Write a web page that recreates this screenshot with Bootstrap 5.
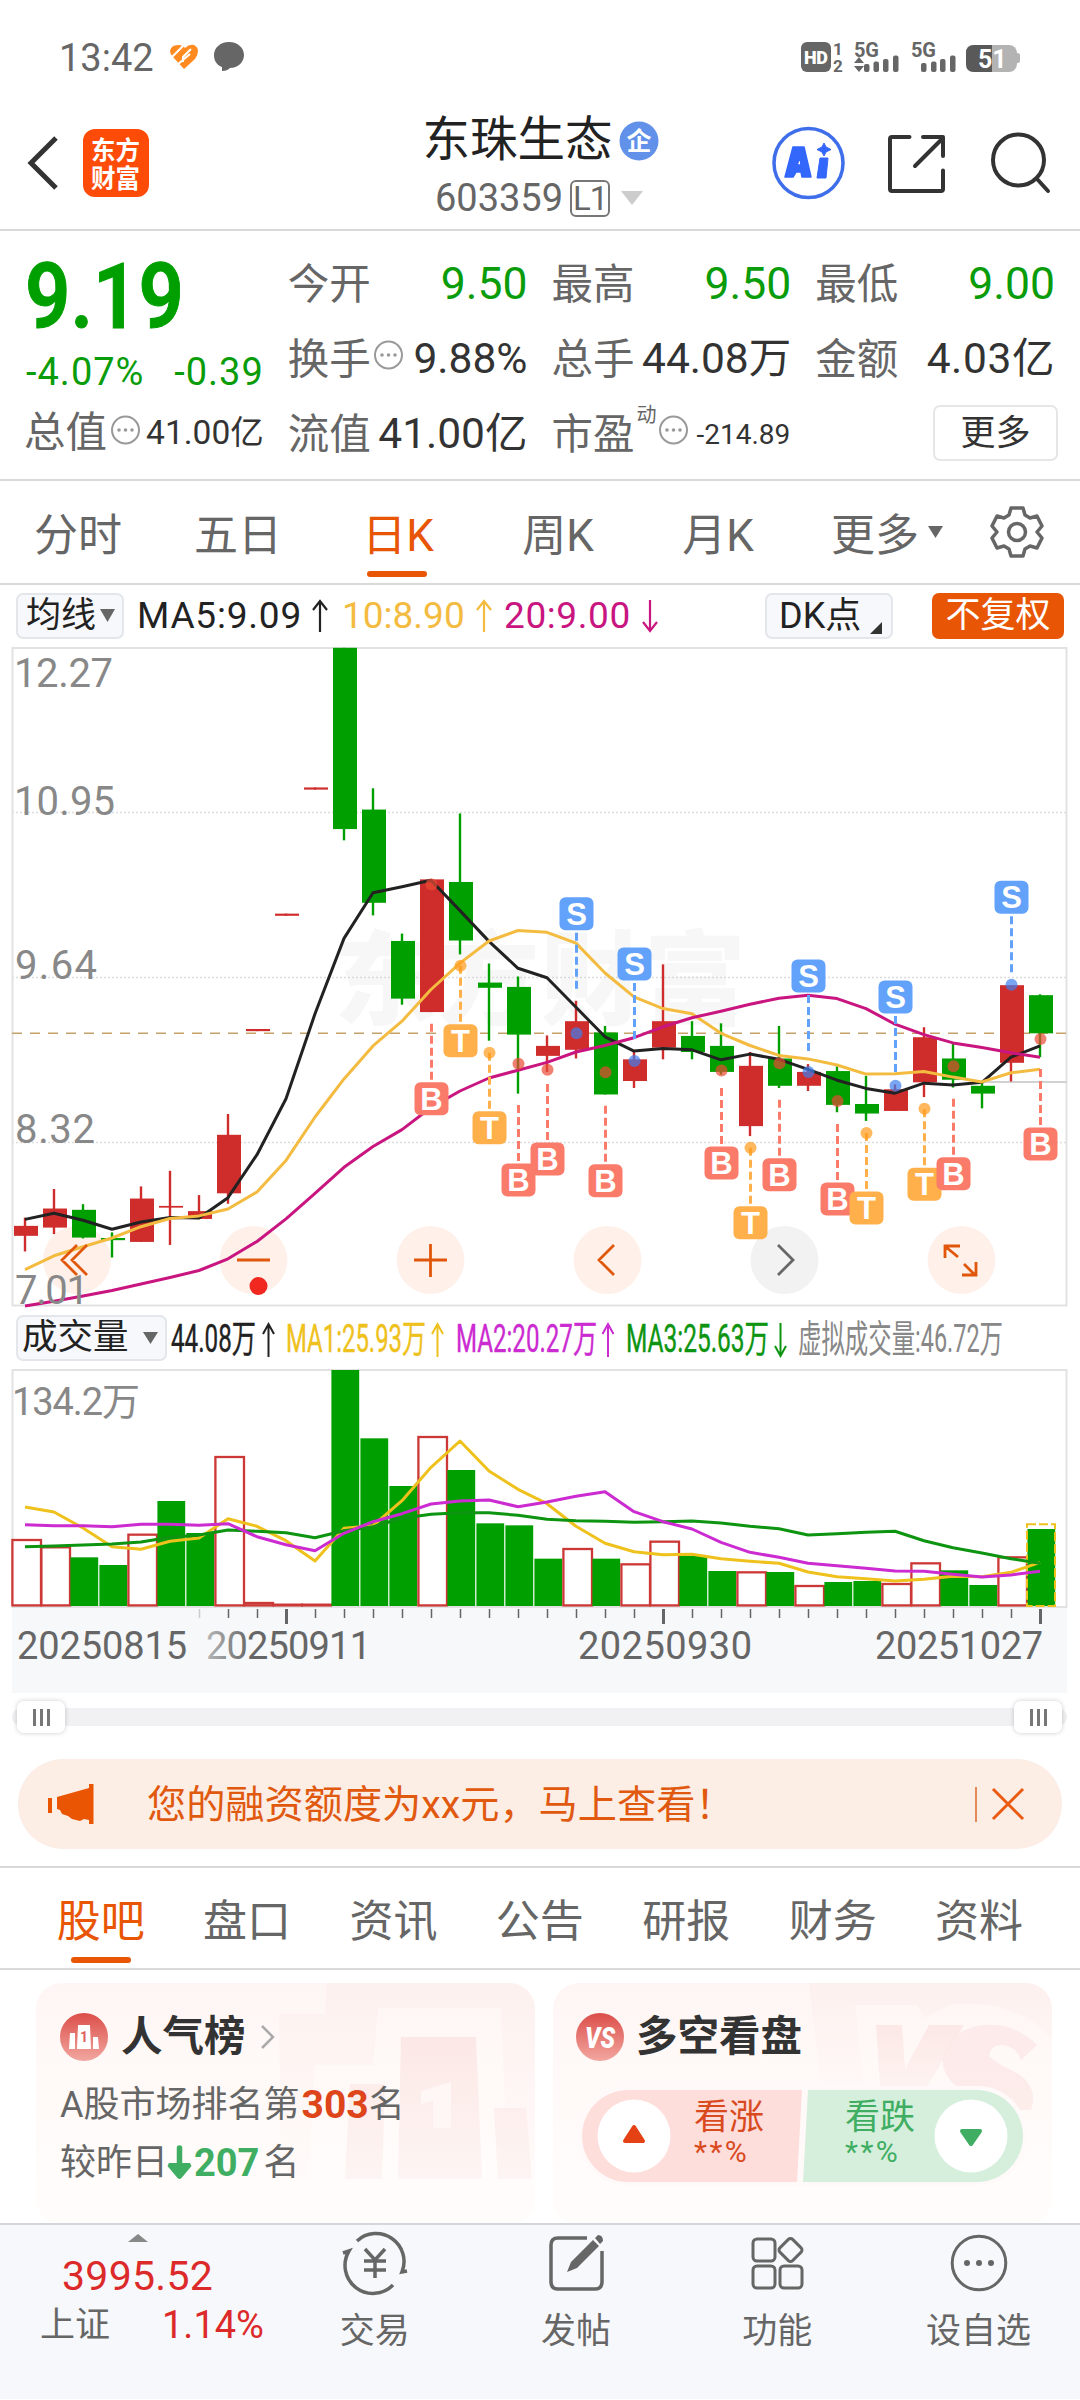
<!DOCTYPE html>
<html lang="zh-CN">
<head>
<meta charset="utf-8">
<meta name="viewport" content="width=device-width, initial-scale=1">
<title>东珠生态 603359</title>
<link href="https://cdn.jsdelivr.net/npm/bootstrap@5.3.0/dist/css/bootstrap.min.css" rel="stylesheet">
<style>
  body { width:1080px; height:2400px; overflow:hidden; background:#fff; color:#333;
    font-family:Roboto,"Noto Sans CJK SC",sans-serif; font-size:38px; line-height:1; }
  svg { display:block; flex:none; overflow:visible; }
  svg text { font-family:Roboto,"Noto Sans CJK SC",sans-serif; }
  .line-b { border-bottom:2px solid #d9d9d9; }
  .g { color:#0a9c0a; } .t6 { color:#666; } .or { color:#e85504; }
  .status-row { height:76px; padding:40px 0 0 59px; color:#666; }
  .head-row { height:155px; padding:0 28px 0 27px; }
  .head-left, .head-right { width:290px; height:100%; padding-top:10px; }
  .stock-name { font-size:47.5px; color:#222; height:52px; }
  .stock-code { height:44px; margin-top:9px; color:#666; margin-left:-3px; }
  .l1-box { border:2px solid #777; border-radius:6px; width:40px; height:37px; font-size:33px; margin-left:7px; letter-spacing:-1px; }
  .quote { height:250px; padding:16px 25px 0 26px; display:grid; grid-template-columns:repeat(4,1fr); column-gap:26px; }
  .quote .cellrow { height:75px; white-space:nowrap; }
  .lab { font-size:41.5px; color:#666; margin-left:-2px; }
  .val { font-size:44.5px; } .v2 { font-size:42.5px; } .v3 { font-size:33.5px; } .v4 { font-size:28px; }
  .more-btn { width:125px; height:56px; border:2px solid #e6e6e6; border-radius:7px; font-size:35px; margin:-3px -3px 0 0; }
  .ktabs { height:104px; font-size:44px; color:#666; padding-top:8px; }
  .ktabs .ktab { width:160px; text-align:center; position:relative; }
  .underbar { position:absolute; width:60px; height:6px; border-radius:3px; background:#e85504; left:50%; margin-left:-31px; }
  .ma-row { height:61px; padding-left:16px; font-size:37px; color:#222; }
  .softbtn { background:#f7f8fb; border:2px solid #e3e6ea; border-radius:7px; height:46px; color:#222; }
  .adj { background:#e85504; color:#fff; border-radius:7px; width:132px; height:46px; font-size:35px; margin-right:16px; }
  .vol-row { height:60px; padding-left:16px; }
  .sliderbox { height:65px; padding:14px 13px 0 12px; }
  .slidetrack { height:18px; border-radius:9px; background:#f1f1f3; width:1055px; padding:0 5px; }
  .knob { width:48px; height:32px; background:#fff; border-radius:7px; box-shadow:0 0 5px rgba(0,0,0,.2); gap:4px; }
  .knob i { width:3px; height:17px; background:#777; }
  .notice { margin:0 18px; height:90px; border-radius:45px; background:#fcede5; color:#e0590f; font-size:39.2px; padding:0 38px 0 29px; }
  .notice .vr-line { width:2px; height:35px; background:#e08a5a; }
  .btabs { height:104px; padding:7px 27px 0 27.5px; font-size:44px; color:#666; border-top:2px solid #d9d9d9; margin-top:17px; }
  .btabs > div { width:146.4px; text-align:center; position:relative; }
  .cards { height:253px; padding:13px 28px 0 36px; gap:18px; overflow:hidden; }
  .pcard { position:relative; width:499px; height:242px; border-radius:26px; background:linear-gradient(#fef6f4,#fffaf8 50%,#fffdfc); overflow:hidden; padding:30px 24px 0 25px; }
  .pcard .deco { position:absolute; left:0; top:0; }
  .ptitle { font-size:41.5px; font-weight:700; color:#333; height:48px; position:relative; }
  .pline { font-size:36px; color:#666; position:relative; white-space:nowrap; }
  .pline b { font-size:39px; }
  .pill { position:relative; width:449px; height:99px; margin:25px 0 0 -1px; }
  .pillbody { position:absolute; left:74px; width:350px; top:0; height:99px; padding:14px 0 0 43px; }
  .pillbody > div { width:151px; }
  .pillbody p { font-size:30px; line-height:34px; letter-spacing:2.5px; }
  .botnav { height:176px; background:#f7f8fb; border-top:2px solid #d3d6db; color:#666; font-size:35px; padding-top:9px; }
  .botnav .nitem { width:201.3px; }
  .botnav .ncap { margin-top:22px; }
</style>
</head>
<body>
<!-- status bar -->
<div class="status-row d-flex">
  <span style="line-height:36px">13:42</span>
  <svg width="80" height="36" viewBox="168 40 80 36" style="margin-left:14px"><path d="M170 51q1-6 8-6 5 0 7 3 4-4 9-3 4 2 4 6 0 4-3 8l-11 10-11-12q-3-3-3-6" fill="#ff8a1f"/><path d="M170 59l13-13M177 65l13-11M183 62v-5l8-8" stroke="#fff" stroke-width="2" fill="none"/><path d="M229 42c9 0 15 6 15 13s-6 13-14 13c-2 2-4 3-8 3v-4c-5-2-8-6-8-12 0-7 6-13 15-13z" fill="#666"/></svg>
  <svg width="230" height="36" viewBox="795 40 230 36" style="margin-left:547px">
    <rect x="801" y="42" width="30" height="30" rx="6" fill="#666"/><text x="804" y="64" font-size="18" font-weight="900" fill="#fff" textLength="24">HD</text>
    <g fill="#666" font-weight="700"><text x="833" y="55" font-size="17">1</text><text x="833" y="71.500" font-size="17">2</text><text x="854" y="56.500" font-size="20" textLength="25">5G</text><text x="911" y="56.500" font-size="20" textLength="25">5G</text>
    <path d="M859 57l5 6h-10zM859 72l5-6h-10z"/>
    <rect x="864" y="64" width="5.500" height="8" rx="2"/><rect x="873.500" y="61.500" width="5.500" height="10.500" rx="2"/><rect x="883" y="59" width="5.500" height="13" rx="2"/><rect x="893" y="55.500" width="5.500" height="16.500" rx="2"/>
    <rect x="921" y="63" width="5.500" height="9" rx="2"/><rect x="931" y="61.500" width="5.500" height="10.500" rx="2"/><rect x="940" y="59" width="5.500" height="13" rx="2"/><rect x="950" y="55.500" width="5.500" height="16.500" rx="2"/></g>
    <rect x="966" y="45" width="51" height="27" rx="8" fill="#b3b3b3"/><rect x="1015" y="53" width="5" height="10" rx="2.500" fill="#b3b3b3"/><path d="M992 45h-18q-8 0-8 8v11q0 8 8 8h18z" fill="#595959"/>
    <text x="978" y="67.500" font-size="25" font-weight="700" fill="#fff">51</text>
  </svg>
</div>
<!-- title bar -->
<header class="head-row d-flex justify-content-between line-b">
  <div class="head-left d-flex align-items-start">
    <svg width="32" height="140" viewBox="27 86 32 140"><path d="M56 138L31 163l25 25" fill="none" stroke="#333" stroke-width="5"/></svg>
    <svg width="66" height="140" viewBox="84 86 66 140" style="margin-left:24px"><rect x="84" y="129" width="66" height="68" rx="12" fill="#ff4b08"/><g fill="#fff" font-weight="700" font-size="26"><text x="92" y="160" textLength="49" lengthAdjust="spacingAndGlyphs">东方</text><text x="92" y="188" textLength="49" lengthAdjust="spacingAndGlyphs">财富</text></g></svg>
  </div>
  <div class="d-flex flex-column align-items-center" style="padding-top:39px;padding-left:2px">
    <div class="stock-name d-flex align-items-center">东珠生态<svg width="40" height="40" viewBox="0 0 40 40" style="margin-left:6px"><circle cx="20" cy="20" r="19.500" fill="#6291ea"/><text x="20" y="29" font-size="25" font-weight="700" fill="#fff" text-anchor="middle">企</text></svg></div>
    <div class="stock-code d-flex align-items-center">603359<span class="l1-box d-inline-flex align-items-center justify-content-center">L1</span><svg width="22" height="14" style="margin-left:11px"><path d="M0 0h22L11 14z" fill="#ccc"/></svg></div>
  </div>
  <div class="head-right d-flex justify-content-end">
    <svg width="280" height="130" viewBox="772 86 280 130">
      <circle cx="808.500" cy="163" r="34.500" fill="none" stroke="#3f6eea" stroke-width="3.500"/>
      <path d="M793 147h11l7 30h-9l-1-5h-5l-3 5h-8zM800 157l-3 8h4z" fill="#3366fb" stroke="#3366fb" stroke-width="1.500" stroke-linejoin="round" fill-rule="evenodd"/>
      <path d="M820 158h8l-2 20h-9zM824 143l2 4 5 2.500-5 2.500-2 4-2-4-5-2.500 5-2.500z" fill="#3366fb" stroke="#3366fb" stroke-linejoin="round"/>
      <g fill="none" stroke="#333" stroke-width="4" stroke-linecap="round" stroke-linejoin="round"><path d="M909.500 137H892q-2 0-2 2v50q0 2 2 2h49q2 0 2-2v-18.500M923 137h20v19M915 166l28-28"/><circle cx="1018.500" cy="160" r="25.500"/><path d="M1038 180l10 11"/></g>
    </svg>
  </div>
</header>
<!-- quote -->
<section class="quote line-b">
  <div>
    <div class="d-flex align-items-center" style="height:102px"><svg width="160" height="66" viewBox="26 265 160 66"><text x="25" y="328" font-size="90" font-weight="600" fill="#009f00" stroke="#009f00" textLength="159" lengthAdjust="spacingAndGlyphs">9.19</text></svg></div>
    <div class="d-flex align-items-center justify-content-between g" style="height:46px"><span style="letter-spacing:1px">-4.07%</span><span style="letter-spacing:1px">-0.39</span></div>
    <div class="cellrow d-flex align-items-center justify-content-between"><span class="lab">总值</span><svg width="31" height="34" viewBox="0 0 31 34"><circle cx="14.500" cy="14" r="13.500" fill="none" stroke="#999" stroke-width="2"/><g fill="#999"><circle cx="8" cy="14" r="1.800"/><circle cx="14.500" cy="14" r="1.800"/><circle cx="21" cy="14" r="1.800"/></g></svg><span class="v3">41.00亿</span></div>
  </div>
  <div>
    <div class="cellrow d-flex align-items-center justify-content-between"><span class="lab">今开</span><span class="val g">9.50</span></div>
    <div class="cellrow d-flex align-items-center justify-content-between"><span class="lab">换手</span><svg width="31" height="34" viewBox="2 0 31 34" style="margin-right:4px"><circle cx="15.500" cy="12" r="13.500" fill="none" stroke="#999" stroke-width="2"/><g fill="#999"><circle cx="9" cy="12" r="1.800"/><circle cx="15.500" cy="12" r="1.800"/><circle cx="22" cy="12" r="1.800"/></g></svg><span class="v2">9.88%</span></div>
    <div class="cellrow d-flex align-items-center justify-content-between"><span class="lab">流值</span><span class="v2">41.00亿</span></div>
  </div>
  <div>
    <div class="cellrow d-flex align-items-center justify-content-between"><span class="lab">最高</span><span class="val g">9.50</span></div>
    <div class="cellrow d-flex align-items-center justify-content-between"><span class="lab">总手</span><span class="v2">44.08万</span></div>
    <div class="cellrow d-flex align-items-center"><span class="lab">市盈</span><span class="t6" style="font-size:20px;padding-bottom:40px;margin-left:2px">动</span><svg width="31" height="34" viewBox="0 0 31 34" style="margin:0 8px 0 1px"><circle cx="15.500" cy="12" r="13.500" fill="none" stroke="#999" stroke-width="2"/><g fill="#999"><circle cx="9" cy="12" r="1.800"/><circle cx="15.500" cy="12" r="1.800"/><circle cx="22" cy="12" r="1.800"/></g></svg><span class="v4">-214.89</span></div>
  </div>
  <div>
    <div class="cellrow d-flex align-items-center justify-content-between"><span class="lab">最低</span><span class="val g">9.00</span></div>
    <div class="cellrow d-flex align-items-center justify-content-between"><span class="lab">金额</span><span class="v2" style="letter-spacing:.600px">4.03亿</span></div>
    <div class="cellrow d-flex align-items-center justify-content-end"><span class="more-btn d-flex align-items-center justify-content-center">更多</span></div>
  </div>
</section>
<!-- period tabs -->
<nav class="ktabs d-flex align-items-center line-b">
  <div class="ktab" style="margin-left:-2px">分时</div><div class="ktab">五日</div><div class="ktab or">日K<span class="underbar" style="top:57px"></span></div><div class="ktab">周K</div><div class="ktab">月K</div>
  <div class="d-flex align-items-center" style="margin-left:33px">更多<svg width="15" height="12" style="margin:-8px 0 0 9px"><path d="M0 0h15L7.500 12z" fill="#666"/></svg></div>
  <svg width="52" height="52" viewBox="-26 -22 52 52" style="margin-left:48px"><path d="M-6-24H6L8-17 13-14 20-16 25-6 20 0 25 6 20 16 13 14 8 17 6 24H-6L-8 17-13 14-20 16-25 6-20 0-25-6-20-16-13-14-8-17z" fill="none" stroke="#666" stroke-width="3.500" stroke-linejoin="round"/><circle r="8.500" fill="none" stroke="#666" stroke-width="3.500"/></svg>
</nav>
<div class="ma-row d-flex align-items-center">
  <span class="softbtn d-flex align-items-center justify-content-between" style="width:108px;padding:0 7px 0 8px;font-size:35px">均线<svg width="15" height="13"><path d="M0 0h15L7.500 13z" fill="#666"/></svg></span>
  <span style="margin-left:13px;width:174px;letter-spacing:.800px">MA5:9.09</span>
  <svg width="18" height="34" viewBox="0 0 18 34"><path d="M9 33V3M2 11l7-9 7 9" fill="none" stroke="#222" stroke-width="2.200"/></svg>
  <span style="margin-left:13px;width:133px;color:#f4bb41">10:8.90</span>
  <svg width="18" height="34" viewBox="0 0 18 34"><path d="M9 33V3M2 11l7-9 7 9" fill="none" stroke="#f4bb41" stroke-width="2.200"/></svg>
  <span style="margin-left:11px;width:137px;color:#c9157f;letter-spacing:.600px">20:9.00</span>
  <svg width="18" height="34" viewBox="0 0 18 34"><path d="M9 1v30M2 23l7 9 7-9" fill="none" stroke="#c9157f" stroke-width="2.200"/></svg>
  <span class="softbtn d-flex align-items-center" style="width:128px;margin-left:106px;padding-left:12px;font-size:36px;white-space:nowrap">DK点<svg width="12" height="12" style="margin:24px 0 0 9px"><path d="M12 0v12H0z" fill="#333"/></svg></span>
  <span class="adj d-flex align-items-center justify-content-center ms-auto">不复权</span>
</div>
<!-- candlestick chart -->
<svg id="kchart" width="1080" height="662" viewBox="0 646 1080 662">
  <text x="334" y="1017" font-size="102" font-weight="900" fill="#f7f7f7" textLength="412" lengthAdjust="spacing">东方财富</text>
  <g stroke="#dcdcdc" stroke-width="1.500" stroke-dasharray="2 2"><path d="M12 812.600H1067M12 977.400H1067M12 1142.600H1067"/></g>
  <rect x="12.500" y="648" width="1054" height="657.500" fill="none" stroke="#e2e2e2" stroke-width="2"/>
  <path d="M983 1082H1067" stroke="#d2d2d2" stroke-width="2"/>
  <path d="M12 1033.300H1067" stroke="#c4a26a" stroke-width="1.500" stroke-dasharray="10 8"/>
  <g id="controls"><circle cx="77" cy="1260" r="34" fill="#fff1ea"/><circle cx="253.500" cy="1260" r="34" fill="#fff1ea"/><circle cx="430.500" cy="1260" r="34" fill="#fff1ea"/><circle cx="607.500" cy="1260" r="34" fill="#fff1ea"/><circle cx="784.500" cy="1260" r="34" fill="#f2f2f2"/><circle cx="961.500" cy="1260" r="34" fill="#fff1ea"/></g>
  <g id="candles"></g><g id="malines" fill="none" stroke-width="3" stroke-linejoin="round"></g><g id="marks"></g>
  <g fill="none" stroke="#e0570c" stroke-width="2.800"><path d="M77 1245l-15 15 15 15M87 1245l-15 15 15 15M237 1260h33M414 1260h33M430.500 1244v33M614 1245l-15 15 15 15M945 1258v-12h15M946 1247l12 10M976 1262v13h-14M975 1275l-11-11"/><path d="M778 1245l15 15-15 15" stroke="#666"/></g>
  <circle cx="258.500" cy="1286" r="9" fill="#f02820"/>
  <g font-size="40" fill="#888"><text x="14" y="687" textLength="99">12.27</text><text x="14" y="814.500" textLength="101">10.95</text><text x="15" y="979" textLength="82">9.64</text><text x="15" y="1143" textLength="80">8.32</text><text x="15" y="1304" textLength="74">7.01</text></g>
</svg>
<!-- volume legend -->
<div class="vol-row d-flex align-items-center">
  <span class="softbtn d-flex align-items-center justify-content-between" style="width:151px;padding:0 7px 0 4px;font-size:35.500px">成交量<svg width="15" height="12"><path d="M0 0h15L7.500 12z" fill="#666"/></svg></span>
  <svg width="840" height="40" viewBox="167 1318 840 40" font-size="38">
    <text x="171" y="1352" fill="#222" stroke="#222" stroke-width=".4" textLength="85" lengthAdjust="spacingAndGlyphs">44.08万</text>
    <text x="286" y="1352" fill="#efc11c" stroke="#efc11c" stroke-width=".4" textLength="140" lengthAdjust="spacingAndGlyphs">MA1:25.93万</text>
    <text x="456" y="1352" fill="#cb2bd0" stroke="#cb2bd0" stroke-width=".4" textLength="141" lengthAdjust="spacingAndGlyphs">MA2:20.27万</text>
    <text x="626" y="1352" fill="#0d9410" stroke="#0d9410" stroke-width=".4" textLength="143" lengthAdjust="spacingAndGlyphs">MA3:25.63万</text>
    <text x="798" y="1352" fill="#888" textLength="205" lengthAdjust="spacingAndGlyphs">虚拟成交量:46.72万</text>
    <g fill="none" stroke-width="2"><path d="M268.500 1357v-32M263 1334l5.500-10 5.500 10" stroke="#222"/><path d="M437.500 1357v-32M432 1334l5.500-10 5.500 10" stroke="#efc11c"/><path d="M608 1357v-32M602.500 1334l5.500-10 5.500 10" stroke="#cb2bd0"/><path d="M780.500 1323v32M775 1346l5.500 10 5.500-10" stroke="#0d9410"/></g>
  </svg>
</div>
<!-- volume chart with its date axis -->
<svg id="vchart" width="1080" height="326" viewBox="0 1368 1080 326">
  <defs><linearGradient id="fade" gradientUnits="userSpaceOnUse" x1="195" x2="250" y1="0" y2="0"><stop offset="0" stop-color="#ccc"/><stop offset="1" stop-color="#666"/></linearGradient></defs>
  <rect x="12" y="1608" width="1055" height="85" fill="#f7f8fa"/>
  <rect x="12.500" y="1370" width="1054" height="237" fill="none" stroke="#e2e2e2" stroke-width="2"/>
  <text x="12" y="1415" font-size="38" fill="#888" textLength="128">134.2万</text>
  <g id="vbars"></g><g id="vlines" fill="none" stroke-width="3" stroke-linejoin="round"></g><g id="ticks"></g>
  <g font-size="38" fill="#666"><text x="17" y="1659" textLength="170">20250815</text><text x="206" y="1659" textLength="165" fill="url(#fade)">20250911</text><text x="578" y="1659" textLength="174">20250930</text><text x="875" y="1659" textLength="168">20251027</text></g>
</svg>
<div class="sliderbox"><div class="slidetrack d-flex align-items-center justify-content-between"><span class="knob d-flex align-items-center justify-content-center"><i></i><i></i><i></i></span><span class="knob d-flex align-items-center justify-content-center"><i></i><i></i><i></i></span></div></div>
<!-- notice -->
<div class="notice d-flex align-items-center">
  <svg width="48" height="40" viewBox="47 1783 48 40"><path d="M48 1797h4v15h-4zM57 1796l32-9v-4h4.500v40H89v-4l-5-1-4 2-8-2-4-3-6-2-2-4-3-1z" fill="#ea5504"/></svg>
  <span style="margin-left:52px;padding-top:3px;white-space:nowrap">您的融资额度为xx元，马上查看！</span>
  <span class="vr-line ms-auto"></span>
  <svg width="32" height="32" style="margin-left:15px"><path d="M1 1l30 30M31 1L1 31" stroke="#ea5a10" stroke-width="3"/></svg>
</div>
<!-- section tabs -->
<nav class="btabs d-flex align-items-center line-b">
  <div class="or">股吧<span class="underbar" style="top:57px;margin-left:-30px"></span></div><div>盘口</div><div>资讯</div><div>公告</div><div>研报</div><div>财务</div><div>资料</div>
</nav>
<div class="cards d-flex">
  <div class="pcard">
    <svg class="deco" width="499" height="244" viewBox="36 1983 499 244">
      <defs><linearGradient id="pk" x2="0" y2="1"><stop stop-color="#fcefed"/><stop offset="1" stop-color="#fffaf9"/></linearGradient><linearGradient id="pk2" x2="0" y2="1"><stop stop-color="#fce8e6"/><stop offset="1" stop-color="#fdf5f3"/></linearGradient><linearGradient id="rd" x2="0" y2="1"><stop stop-color="#dc4e49"/><stop offset="1" stop-color="#f2a7a0"/></linearGradient></defs>
      <path d="M279 2014H325L327 1983H535V2160H507L501 2008H378L373 2065H315L308 2179H281z" fill="url(#pk)" opacity=".75"/>
      <path d="M401 2037h75l6 142h-84zM350 2084h35l-3 95h-37zM494 2108h32l6 71h-34z" fill="url(#pk2)"/><path d="M421 2091l30-9v46h-18v-27l-12 3z" fill="#fff7f5"/>
    </svg>
    <div class="ptitle d-flex align-items-center"><svg width="48" height="48" style="margin-left:-1px"><circle cx="24" cy="24" r="24" fill="url(#rd)"/><path d="M10 20h5v16H9zM18 12h12l1 24H17zM33 24h5l1 12h-6z" fill="#fff"/><text x="24" y="29" font-size="14" font-weight="700" fill="#e0625c" text-anchor="middle">1</text></svg><span style="margin-left:13px">人气榜</span><svg width="15" height="24" style="margin-left:14px"><path d="M2 1l11 11L2 23" fill="none" stroke="#aaa" stroke-width="2.500"/></svg></div>
    <div class="pline d-flex align-items-center" style="margin-top:24px;height:40px;margin-left:-1px">A股市场排名第<b style="color:#de451a;margin-left:2px">303</b><span>名</span></div>
    <div class="pline d-flex align-items-center" style="margin-top:18px;height:40px;margin-left:-1px">较昨日<svg width="25" height="34" style="margin-left:-1px"><path d="M12.500 2v18" stroke="#3fae62" stroke-width="5.500" stroke-linecap="round"/><path d="M2 17h21l1.500 3-10 12q-2 2-4 0l-10-12z" fill="#3fae62"/></svg><b style="color:#3fae62;margin-left:2px;font-size:38px">207</b><span style="margin-left:4px">名</span></div>
  </div>
  <div class="pcard">
    <svg class="deco" width="499" height="244" viewBox="554 1983 499 244">
      <path d="M810 1983H1053V2040Q1020 1998 950 2005L925 2018 918 2005H856L867 2110H825z" fill="url(#pk)" opacity=".8"/>
      <path d="M877 2025h26l3 44 24-44h35l-45 75h-38z" fill="url(#pk2)"/>
      <path d="M1038 2045q-22-22-52-20-34 3-42 33-2 20 22 34 14 8 10 18h56q8-24-16-38-18-8-26-16 2-14 18-10 10 2 14 14z" fill="#fce9e7" opacity=".85"/>
    </svg>
    <div class="ptitle d-flex align-items-center"><svg width="48" height="48" style="margin-left:-2px"><circle cx="24" cy="24" r="24" fill="url(#rd)"/><text x="24" y="35" font-size="30" font-weight="900" font-style="italic" fill="#fff" text-anchor="middle" textLength="30" lengthAdjust="spacingAndGlyphs">VS</text></svg><span style="margin-left:12px">多空看盘</span></div>
    <div class="pill">
      <svg width="449" height="99" viewBox="577 2086 449 99"><rect x="578" y="2086" width="449" height="99" rx="49" fill="#fffaf9"/><path d="M802 2090H628a46 46 0 0 0 0 92H797z" fill="#fddedb"/><path d="M808 2090H977a46 46 0 0 1 0 92H803z" fill="#d5efdc"/><circle cx="634" cy="2136" r="36.500" fill="#fff"/><circle cx="971" cy="2136" r="36.500" fill="#fff"/><path d="M634 2127l9 14h-18z" fill="#e44114" stroke="#e44114" stroke-width="4" stroke-linejoin="round"/><path d="M971 2144l9-13h-18z" fill="#3fae62" stroke="#3fae62" stroke-width="4" stroke-linejoin="round"/></svg>
      <div class="pillbody d-flex" style="font-size:35px"><div style="color:#d94a1f">看涨<p class="m-0">**%</p></div><div style="color:#3fae62">看跌<p class="m-0">**%</p></div></div>
    </div>
  </div>
</div>
<!-- bottom navigation -->
<nav class="botnav d-flex">
  <div class="d-flex flex-column" style="width:274px;color:#dc2a2a">
    <svg width="20" height="8" style="margin-left:128px"><path d="M0 8h20L10 0z" fill="#888"/></svg>
    <span style="font-size:41px;margin:14px 0 0 62px;letter-spacing:.300px">3995.52</span>
    <div class="d-flex align-items-center" style="margin:10px 0 0 40px;height:36px"><span class="t6">上证</span><span style="font-size:38px;margin-left:52px">1.14%</span></div>
  </div>
  <div class="nitem d-flex flex-column align-items-center"><svg width="68" height="58" viewBox="-34 -29 68 58"><g fill="none" stroke="#666" stroke-width="3.500"><path d="M-18-22A28 28 0 0 1 27 9l5-1M18 22A28 28 0 0 1-26-12l-6 2M-10-14L0-3 10-14M0-3V15M-11-2H11M-11 7H11"/></g></svg><span class="ncap">交易</span></div>
  <div class="nitem d-flex flex-column align-items-center"><svg width="58" height="58" viewBox="548 2235 58 58"><path d="M588 2239h-29q-7 0-7 7v37q0 7 7 7h37q7 0 7-7v-31" fill="none" stroke="#666" stroke-width="3.500"/><path d="M568 2273l4-10 22-22 6 6-22 22zM596 2239l3-3q5 0 5 6l-3 3z" fill="#666"/></svg><span class="ncap">发帖</span></div>
  <div class="nitem d-flex flex-column align-items-center"><svg width="58" height="58" viewBox="749 2235 58 58"><g fill="none" stroke="#666" stroke-width="3"><rect x="754" y="2240" width="22" height="22" rx="4"/><rect x="754" y="2267" width="22" height="22" rx="4"/><rect x="781" y="2267" width="22" height="22" rx="4"/><rect x="782.500" y="2242" width="18" height="18" rx="3" transform="rotate(45 791.500 2251)"/></g></svg><span class="ncap">功能</span></div>
  <div class="nitem d-flex flex-column align-items-center"><svg width="58" height="58" viewBox="-29 -29 58 58"><circle r="26.800" fill="none" stroke="#666" stroke-width="3"/><g fill="#666"><circle cx="-12" r="3"/><circle r="3"/><circle cx="12" r="3"/></g></svg><span class="ncap">设自选</span></div>
</nav>
<script src="https://cdn.jsdelivr.net/npm/bootstrap@5.3.0/dist/js/bootstrap.bundle.min.js"></script>
<script>
const X = i => 25 + 29 * i, KY = v => 640 + v / 2.306, VY = v => 1300 + v / 3;
// [up?, high, body top, body bottom, low]
const K = [[1,1332,1351,1374,1410],[1,1266,1311,1355,1370],[0,1301,1314,1378,1380],[0,1366,1379,1384,1424],[1,1260,1288,1388,1388],[1,1224,1305,1309,1395],[1,1280,1317,1335,1335],[1,1093,1141,1276,1300],[1,897,897,902,902],[1,631,631,636,636],[1,340,340,345,345],[0,18,18,436,462],[0,342,391,606,635],[0,677,694,827,841],[1,552,552,858,858],[0,400,558,693,725],[0,746,790,802,924],[0,776,800,910,1046],[1,912,936,959,996],[1,832,879,945,965],[0,890,905,1048,1048],[1,950,967,1017,1033],[1,748,879,940,967],[0,879,913,950,967],[0,884,936,996,1002],[1,950,982,1121,1144],[0,890,965,1028,1033],[1,978,996,1028,1040],[0,983,994,1072,1089],[0,1005,1070,1092,1109],[1,1025,1036,1086,1086],[1,893,916,1020,1054],[0,930,965,1014,1032],[0,1018,1028,1046,1080],[1,796,796,975,1018],[0,817,819,907,962]];
document.getElementById('candles').innerHTML = K.map(([u,h,t,b,l],i) => {
  const c = u ? '#cf2d2b' : '#009f00';
  return `<path d="M${X(i)} ${KY(h)}V${KY(l)}" stroke="${c}" stroke-width="2.4"/><rect x="${X(i)-11}" y="${KY(t)}" width="24" height="${KY(b)-KY(t)}" fill="${c}"/>`;
}).join('');
const path = (a, Y, c) => `<path d="M${a.map((v,i) => X(i)+' '+Y(v).toFixed(1)).join('L')}" stroke="${c}"/>`;
document.getElementById('malines').innerHTML =
  path([1336,1322,1338,1359,1342,1332,1333,1286,1187,1058,862,688,583,569,554,624,695,757,779,847,915,948,942,945,968,955,967,990,1015,1034,1045,1022,1026,1020,962,936], KY, '#222') +
  path([1452,1420,1399,1379,1353,1334,1328,1312,1273,1200,1100,1012,936,879,806,745,694,670,674,699,768,823,850,862,907,935,958,966,980,1001,1000,995,1008,1019,998,990], KY, '#f4bb41') +
  path([1536,1525,1513,1500,1485,1470,1454,1427,1387,1335,1276,1216,1168,1129,1078,1040,1010,992,974,950,935,917,892,871,856,840,826,819,827,850,886,910,929,940,952,962], KY, '#c9157f');
// [index, letter, badge centre, dot]
const M = [[14,'B',1058,564],[15,'T',924,751],[16,'T',1125,952],[17,'B',1245,977],[18,'B',1197,991],[19,'S',631,907],[20,'B',1247,997],[21,'S',747,971],[24,'B',1206,993],[25,'T',1344,1171],[26,'B',1233,976],[27,'S',775,996],[28,'B',1289,1063],[29,'T',1310,1137],[30,'S',823,1028],[31,'T',1255,1081],[32,'B',1231,983],[34,'S',593,795],[35,'B',1162,920]];
const MC = {B:['#fb7b6b','#ea4a35'], T:['#ffb04a','#ff9a1a'], S:['#62a2fb','#3f7ff0']};
document.getElementById('marks').innerHTML = M.map(([i,s,c,d]) => {
  const x = X(i)+.5, y = KY(c), [bg,dot] = MC[s], k = s==='S' ? 1 : -1;
  return `<path d="M${x} ${y+k*(k>0?19:75)}V${y+k*(k>0?75:18)}" stroke="${bg}" stroke-width="3" stroke-dasharray="8 4"/><circle cx="${x}" cy="${KY(d)}" r="6" fill="${dot}" opacity=".7"/><rect x="${x-17}" y="${y-16.5}" width="34" height="33" rx="6" fill="${bg}"/><text x="${x}" y="${y+11}" text-anchor="middle" font-size="31" font-weight="700" fill="#fff" style="font-family:'Liberation Sans'">${s}</text>`;
}).join('');
// volume: positive top = outlined (up), negative = solid (down)
const V = [720,742,-772,-795,704,-603,-699,471,909,914,914,-210,-415,-558,411,-510,-670,-676,-776,747,-776,793,725,-767,-813,817,-816,858,-846,-843,852,790,-811,-855,772,-687];
document.getElementById('vbars').innerHTML = V.map((v,i) => {
  const x = 12.4 + 29*i, y = VY(Math.abs(v));
  return v < 0 ? `<rect x="${x}" y="${y}" width="27.8" height="${1606-y}" fill="#009f00"/>`
    : `<rect x="${x}" y="${y}" width="28.6" height="${1605.4-y}" fill="#fff" stroke="#cb3836" stroke-width="2.3"/>`;
}).join('') + `<rect x="1027" y="${VY(673)}" width="28" height="${1606-VY(673)}" fill="none" stroke="#efc11c" stroke-width="2" stroke-dasharray="9 3"/>`;
document.getElementById('vlines').innerHTML =
  path([621,636,684,740,748,724,714,656,679,722,783,685,677,602,502,423,513,568,611,679,730,755,764,763,776,784,790,816,830,836,843,838,829,830,817,787], VY, '#efc11c') +
  path([740,738,735,732,726,712,705,690,694,698,713,692,680,655,643,638,638,646,658,662,664,667,665,663,669,679,686,705,701,697,694,722,743,759,776,790], VY, '#0d9410') +
  path([674,677,677,680,673,673,676,671,710,734,752,700,665,641,612,603,600,620,606,589,575,635,665,687,727,757,772,790,797,805,813,814,823,831,825,814], VY, '#cb2bd0');
let t = '';
for (let i = 6; i < 36; i++) { const big = i===9||i===22||i===35; t += `<path d="M${X(i)+.5} 1609v${big?15:9}" stroke="${i===6?'#ccc':'#666'}" stroke-width="${big?3:1.5}"/>`; }
document.getElementById('ticks').innerHTML = t;
</script>
</body>
</html>
